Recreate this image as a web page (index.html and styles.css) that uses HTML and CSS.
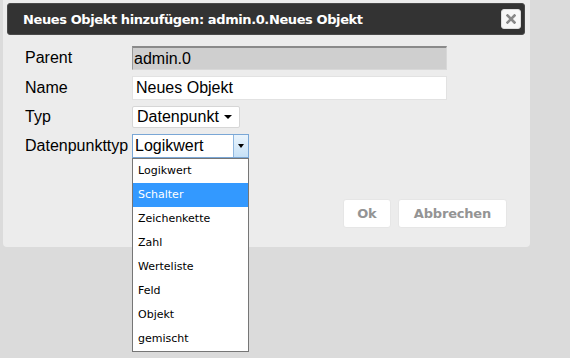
FILE: index.html
```html
<!DOCTYPE html>
<html lang="de">
<head>
  <meta charset="UTF-8">
  <title>Neues Objekt hinzufügen</title>
  <link rel="stylesheet" href="styles.css">
</head>
<body>
  <div class="dialog">
    <div class="titlebar">
      <span class="title">Neues Objekt hinzufügen: admin.0.Neues Objekt</span>
      <button class="close" title="Schließen">
        <svg width="10" height="10" viewBox="0 0 10 10">
          <path d="M1.5 1.5 L8.5 8.5 M8.5 1.5 L1.5 8.5" stroke="#888" stroke-width="2.6" stroke-linecap="square"/>
        </svg>
      </button>
    </div>

    <div class="form">
      <label>Parent</label>
      <div class="field readonly">admin.0</div>

      <label>Name</label>
      <div class="field">Neues Objekt</div>

      <label>Typ</label>
      <div class="select">Datenpunkt <span class="caret"></span></div>

      <label>Datenpunkttyp</label>
      <div class="select open">
        <span class="value">Logikwert</span>
        <span class="arrow"><span class="caret"></span></span>
      </div>
    </div>

    <div class="buttons">
      <button class="btn ok">Ok</button>
      <button class="btn">Abbrechen</button>
    </div>
  </div>

  <!-- open list of the Datenpunkttyp select -->
  <ul class="dropdown">
    <li>Logikwert</li>
    <li class="active">Schalter</li>
    <li>Zeichenkette</li>
    <li>Zahl</li>
    <li>Werteliste</li>
    <li>Feld</li>
    <li>Objekt</li>
    <li>gemischt</li>
  </ul>
</body>
</html>
```

FILE: styles.css
```css
html, body {
  min-height: 358px;
}

body {
  position: relative;
  margin: 0;
  background: #dbdbdb;
  font-family: "Liberation Sans", Arial, sans-serif;
  color: #000;
}

.dialog {
  width: 518px;
  height: 244px;
  margin-left: 3px;
  padding: 3px 5px 0 4px;
  background: #ececec;
  border-radius: 0 0 4px 4px;
}

.titlebar {
  height: 30px;
  background: #333;
  border: 1px solid #4a4a4a;
  border-radius: 3px;
  display: flex;
  align-items: center;
  justify-content: space-between;
  padding: 0 3px 0 15px;
}

.title {
  color: #fff;
  font-family: "DejaVu Sans", Verdana, sans-serif;
  font-weight: bold;
  font-size: 13px;
  letter-spacing: -0.4px;
  margin-top: 1px;
}

.close {
  width: 20px;
  height: 20px;
  padding: 0;
  border: 1px solid #ddd;
  border-radius: 3px;
  background: #f7f7f7;
  display: flex;
  align-items: center;
  justify-content: center;
}

.form {
  display: grid;
  grid-template-columns: 107px 315px;
  row-gap: 6px;
  align-items: center;
  margin: 11px 0 0 18px;
  font-size: 16px;
}

.field {
  height: 24px;
  box-sizing: border-box;
  border: 1px solid #e2e2e2;
  background: #fff;
  padding: 0 3px;
  line-height: 22px;
}

.readonly {
  background: #cfcfcf;
  border-color: #d8d8d8;
  border-top: 2px solid #8a8a8a;
  border-left: 1px solid #9a9a9a;
  line-height: 21px;
  padding-left: 1px;
}

.select {
  width: 108px;
  height: 22px;
  box-sizing: border-box;
  border: 1px solid #d6d6d6;
  border-radius: 2px;
  background: #fff;
  padding: 0 7px 0 4px;
  line-height: 20px;
  display: flex;
  align-items: center;
  justify-content: space-between;
}

.caret {
  display: inline-block;
  width: 0;
  height: 0;
  border-left: 4px solid transparent;
  border-right: 4px solid transparent;
  border-top: 4px solid #000;
}

.select.open {
  width: 117px;
  height: 24px;
  border: 1px solid #7aa7d6;
  border-radius: 0;
  padding: 0 0 0 2px;
}

.arrow {
  width: 15px;
  height: 22px;
  box-sizing: border-box;
  border-left: 1px solid #8fb7e0;
  background: linear-gradient(#eaf4fc, #c6e1f7);
  display: flex;
  align-items: center;
  justify-content: center;
}

.arrow .caret {
  border-left-width: 3.5px;
  border-right-width: 3.5px;
}

.dropdown {
  position: absolute;
  left: 132px;
  top: 158px;
  width: 117px;
  margin: 0;
  padding: 0;
  list-style: none;
  background: #fff;
  border: 1px solid #767676;
  box-sizing: border-box;
  font-family: "DejaVu Sans", Tahoma, sans-serif;
  font-size: 11px;
}

.dropdown li {
  height: 24px;
  line-height: 24px;
  padding-left: 5px;
}

.dropdown li.active {
  background: #3399ff;
  color: #fff;
}

.buttons {
  display: flex;
  justify-content: flex-end;
  gap: 7px;
  margin: 41px 18px 0 0;
}

.btn {
  height: 29px;
  padding: 0 15px;
  border: 1px solid #e6e6e6;
  border-radius: 3px;
  background: #fff;
  color: #949494;
  font-family: "DejaVu Sans", Verdana, sans-serif;
  font-weight: bold;
  font-size: 13px;
  letter-spacing: -0.2px;
}

.btn.ok {
  width: 48px;
  padding: 0;
}
```
